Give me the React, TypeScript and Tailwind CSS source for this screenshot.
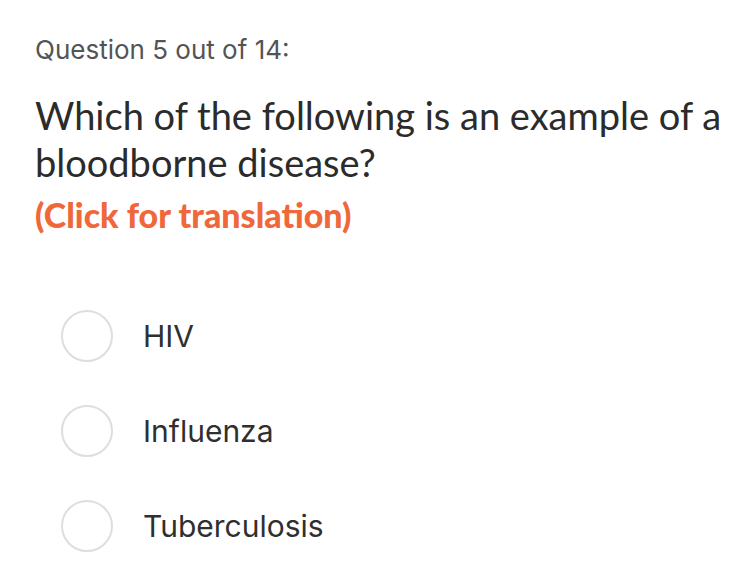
import React from 'react';

const options = ['HIV', 'Influenza', 'Tuberculosis'];

export default function App() {
  const [selected, setSelected] = React.useState<number | null>(null);

  return (
    <div className="min-h-screen bg-white px-[35px] pt-[34px] font-['Inter',sans-serif]">
      <div className="text-[26px] leading-[32px] text-[#545454]">Question 5 out of 14:</div>

      <h1 className="mt-[26px] w-[700px] font-['Lato',sans-serif] text-[38px] leading-[47px] text-[#2b2b2b]">
        Which of the following is an example of a bloodborne disease?
      </h1>
      <button className="mt-[9px] block font-['Lato',sans-serif] text-[34px] font-black leading-[40px] text-[#f0673a]">
        (Click for translation)
      </button>

      <div className="mt-[75px] flex flex-col gap-[43px] pl-[26px]">
        {options.map((opt, i) => (
          <label key={opt} className="flex items-center gap-[30px] cursor-pointer" onClick={() => setSelected(i)}>
            <span
              className={`h-[52px] w-[52px] rounded-full border-2 ${
                selected === i ? 'border-[#f0673a]' : 'border-[#dedede]'
              }`}
            />
            <span className="text-[30px] leading-[52px] text-[#2f2f2f]">{opt}</span>
          </label>
        ))}
      </div>
    </div>
  );
}
